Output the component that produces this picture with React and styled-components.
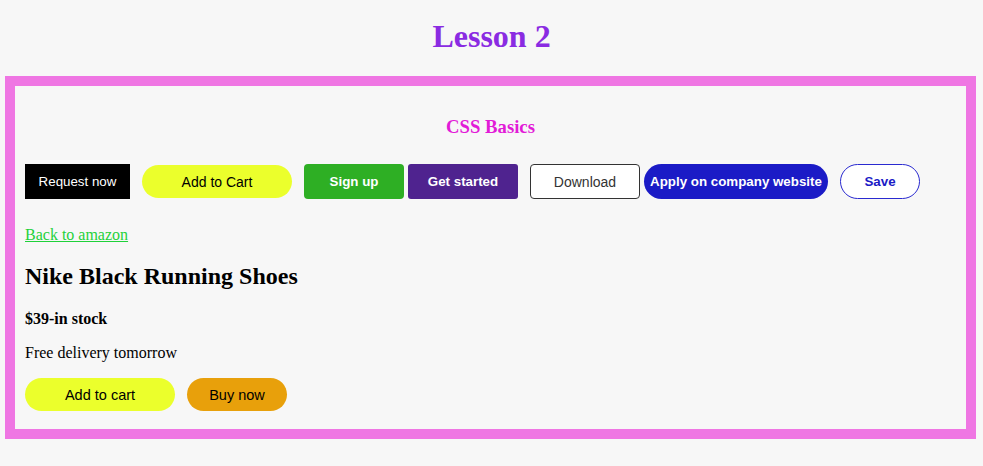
import React from 'react';
import styled, { createGlobalStyle } from 'styled-components';

const GlobalStyle = createGlobalStyle`
  html, body {
    margin: 0;
    padding: 0;
    background: #f7f7f7;
    font-family: "Liberation Serif", "Times New Roman", serif;
  }
`;

const Title = styled.h1`
  margin: 18px 0 21px;
  font-size: 32px;
  line-height: 37px;
  font-weight: bold;
  text-align: center;
  color: #8a2be2;
`;

const Card = styled.section`
  box-sizing: border-box;
  width: 971px;
  margin-left: 5px;
  border: 10px solid #ef76e3;
  padding: 0 10px 18px;
  display: flex;
  flex-direction: column;
  align-items: flex-start;
`;

const Subtitle = styled.h3`
  align-self: stretch;
  margin: 30px 0 0;
  font-size: 18.72px;
  line-height: 22px;
  text-align: center;
  color: #e21bd7;
`;

const ButtonRow = styled.div`
  display: flex;
  align-items: center;
  margin-top: ${({ $top }) => $top}px;
`;

const variants = {
  black: 'background: #000; color: #fff; border: none;',
  yellow: 'background: #ebff2c; color: #000; border: none;',
  green: 'background: #2eaf24; color: #fff; border: none; font-weight: bold;',
  purple: 'background: #4f238f; color: #fff; border: none; font-weight: bold;',
  outline: 'background: #fff; color: #333; border: 1px solid #333;',
  blue: 'background: #1b1bc6; color: #fff; border: none; font-weight: bold;',
  ghost: 'background: #fff; color: #1b1bc6; border: 1px solid #2a2ad0; font-weight: bold;',
  orange: 'background: #e8a00b; color: #000; border: none;',
};

const Button = styled.button`
  box-sizing: border-box;
  flex: none;
  padding: 0;
  width: ${({ $w }) => $w}px;
  height: ${({ $h = 34 }) => $h}px;
  margin-left: ${({ $gap = 0 }) => $gap}px;
  border-radius: ${({ $r = 0 }) => $r}px;
  font-family: "Liberation Sans", Arial, sans-serif;
  font-size: ${({ $fs = 13.33 }) => $fs}px;
  cursor: pointer;
  ${({ $variant }) => variants[$variant]}
`;

const BackLink = styled.a`
  display: block;
  margin-top: 27px;
  font-size: 16px;
  line-height: 18px;
  color: #1fd13a;
  text-decoration: underline;
`;

const ProductName = styled.h2`
  margin: 18px 0 0;
  font-size: 24px;
  line-height: 28px;
  font-weight: bold;
  color: #000;
`;

const Text = styled.p`
  margin: ${({ $top }) => $top}px 0 0;
  font-size: 16px;
  line-height: 18px;
  font-weight: ${({ $bold }) => ($bold ? 'bold' : 'normal')};
  color: #000;
`;

export default function App() {
  return (
    <>
      <GlobalStyle />
      <Title>Lesson 2</Title>
      <Card>
        <Subtitle>CSS Basics</Subtitle>
        <ButtonRow $top={26}>
          <Button $variant="black" $w={105} $h={35}>Request now</Button>
          <Button $variant="yellow" $w={150} $h={33} $r={17} $gap={12} $fs={14}>Add to Cart</Button>
          <Button $variant="green" $w={100} $h={35} $r={4} $gap={12}>Sign up</Button>
          <Button $variant="purple" $w={110} $h={35} $r={3} $gap={4}>Get started</Button>
          <Button $variant="outline" $w={110} $h={35} $r={4} $gap={12} $fs={14}>Download</Button>
          <Button $variant="blue" $w={184} $h={35} $r={18} $gap={4}>Apply on company website</Button>
          <Button $variant="ghost" $w={80} $h={35} $r={18} $gap={12}>Save</Button>
        </ButtonRow>
        <BackLink href="#">Back to amazon</BackLink>
        <ProductName>Nike Black Running Shoes</ProductName>
        <Text $top={20} $bold>$39-in stock</Text>
        <Text $top={16}>Free delivery tomorrow</Text>
        <ButtonRow $top={16}>
          <Button $variant="yellow" $w={150} $h={33} $r={17} $fs={14.5}>Add to cart</Button>
          <Button $variant="orange" $w={100} $h={33} $r={17} $gap={12} $fs={14.5}>Buy now</Button>
        </ButtonRow>
      </Card>
    </>
  );
}
